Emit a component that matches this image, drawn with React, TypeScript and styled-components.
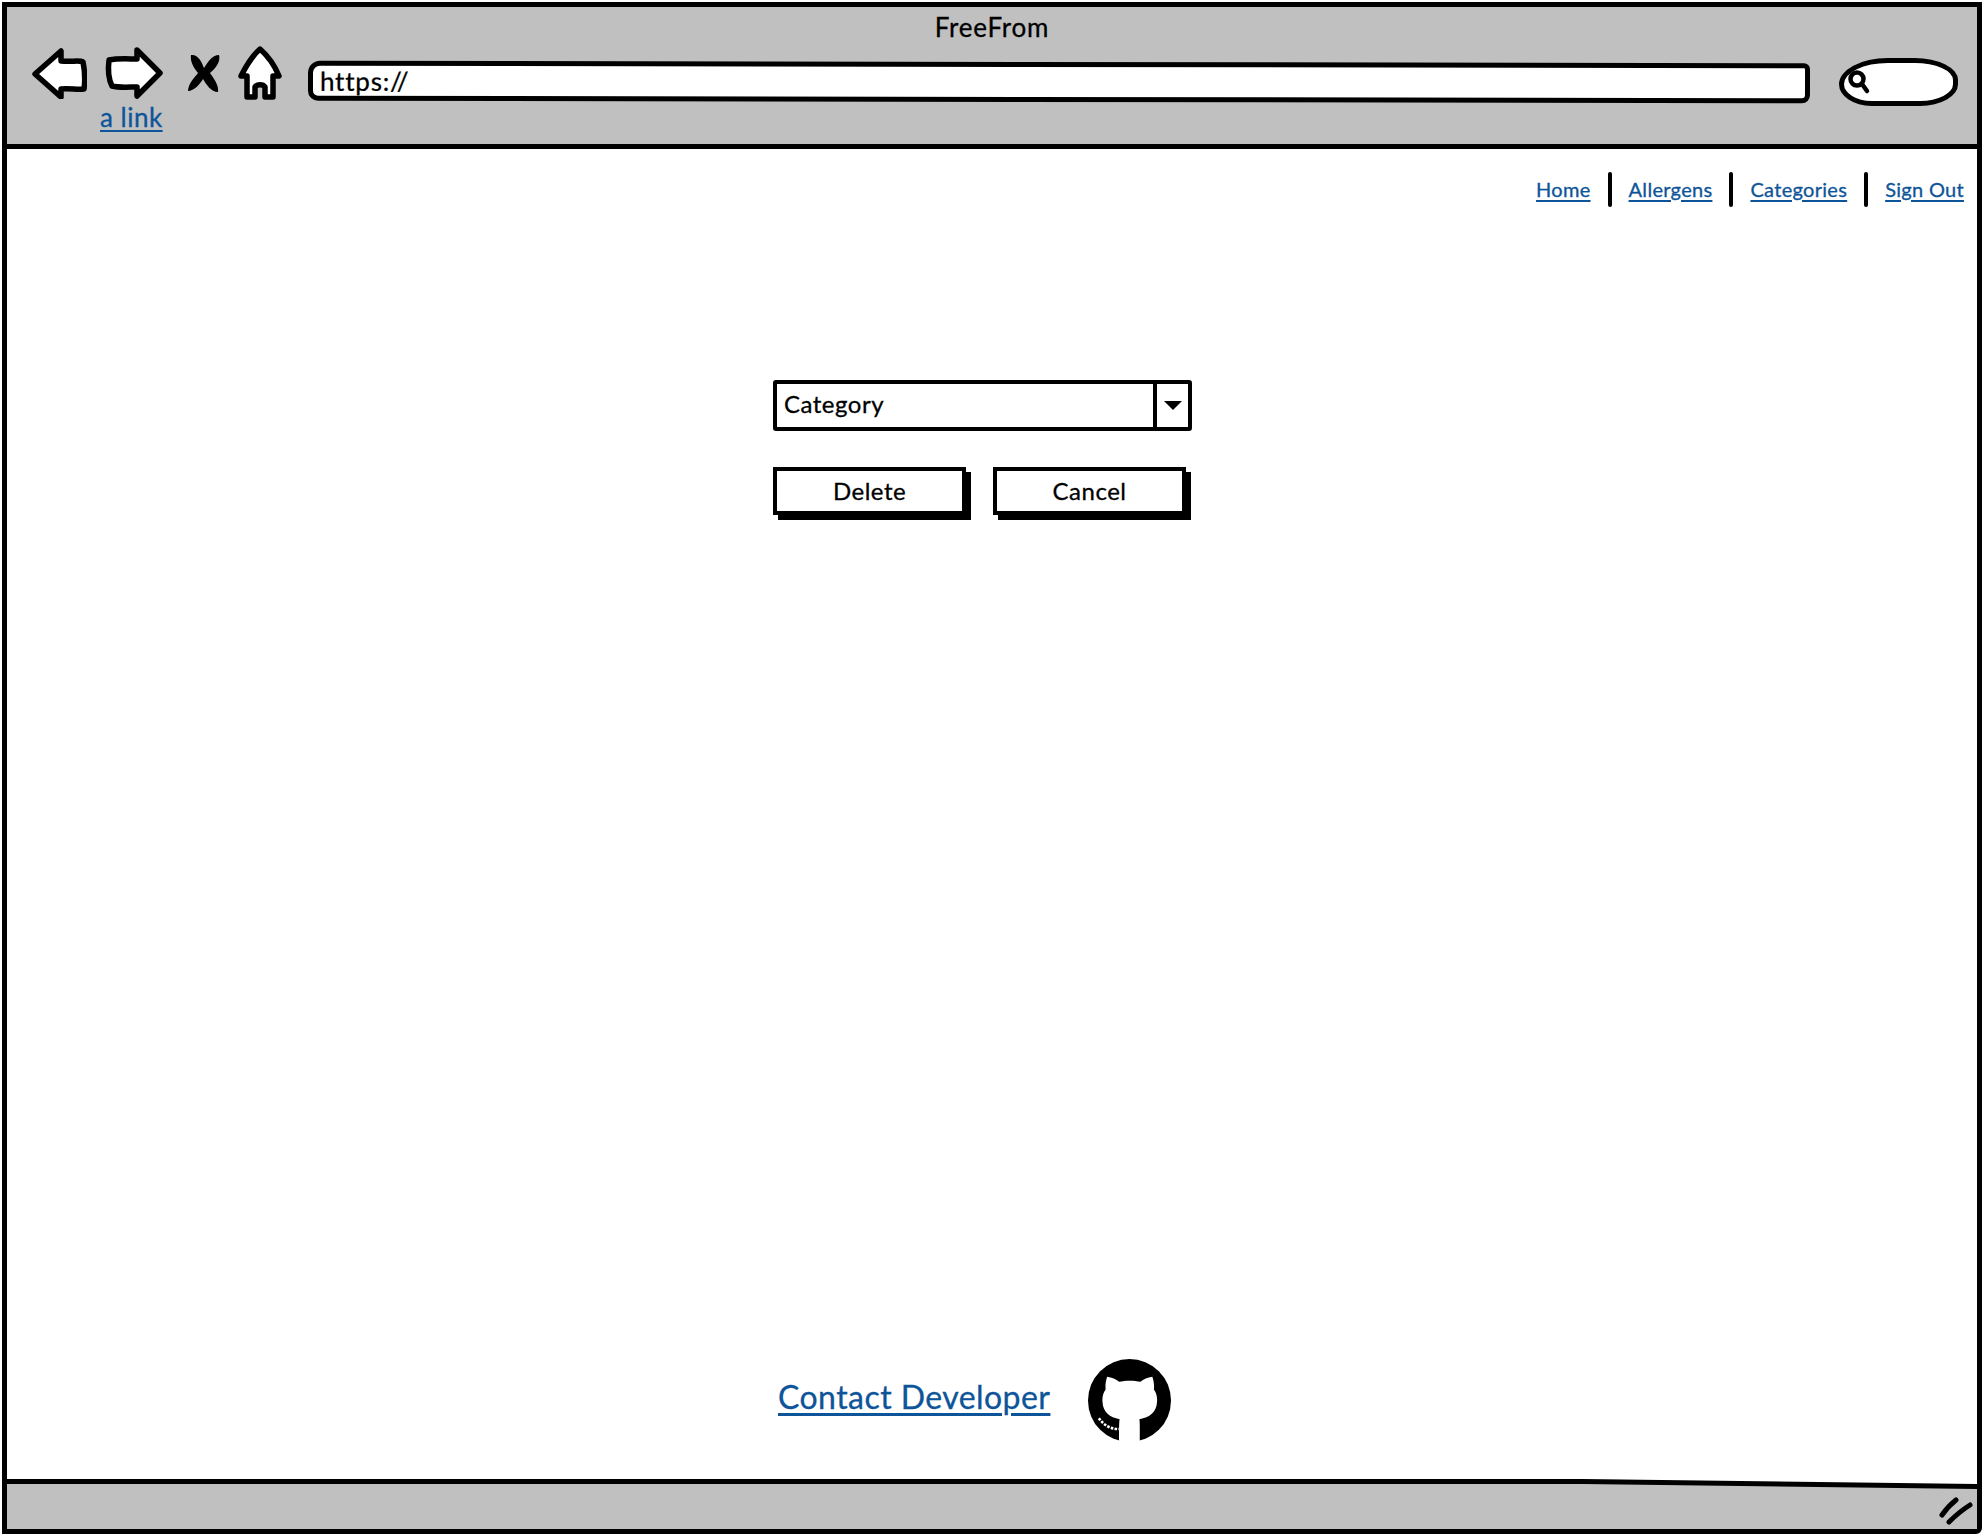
import styled, { createGlobalStyle } from 'styled-components';

const Global = createGlobalStyle`
    html, body {
        margin: 0;
        background: #fff;
    }
    body {
        font-family: "Lato", "Noto Sans", sans-serif;
        color: #000;
        -webkit-text-stroke: 0.3px currentColor;
    }
`

export default function App() {
    return (
        <>
            <Global />
            <Window>
                <Header>
                    <Title>FreeFrom</Title>
                    <Toolbar>
                        <NavGroup>
                            <NavIcons>
                                <NavIcon $left={0} width="55" height="52" viewBox="0 0 55 52">
                                    <path d="M3 27 L29 4 L29 14 C40 15 48 13 51 15 C53 25 53 35 52 42 C45 43 38 41 29 42 L29 50 Z" fill="#fff" stroke="#000" strokeWidth="5.5" strokeLinejoin="round" />
                                </NavIcon>
                                <NavIcon $left={17} width="60" height="54" viewBox="0 0 60 54">
                                    <path d="M5 14 C15 12 25 13 33 13 L33 4 L56 27 L33 50 L33 41 C25 41 15 42 8 40 C4 32 4 22 5 14 Z" fill="#fff" stroke="#000" strokeWidth="5.5" strokeLinejoin="round" />
                                </NavIcon>
                                <NavIcon $left={24} width="32" height="38" viewBox="0 0 32 38">
                                    <path d="M3 1 C10 0 14 8 16 14 C20 8 24 1 31 1 C33 8 27 15 22 19 C26 25 31 31 30 38 C23 38 18 30 15 25 C12 30 6 37 0 37 C0 30 6 24 10 19 C6 14 2 8 3 1 Z" fill="#000" />
                                </NavIcon>
                                <NavIcon $left={18} width="44" height="54" viewBox="0 0 44 54">
                                    <path d="M22 3 C30 10 36 18 41 30 L35 30 L35 51 L27 51 L27 41 C25 38 19 38 17 41 L17 51 L9 51 L9 30 L3 30 C8 20 14 10 22 3 Z" fill="#fff" stroke="#000" strokeWidth="5.5" strokeLinejoin="round" />
                                </NavIcon>
                            </NavIcons>
                            <ToolbarLink href="#">a link</ToolbarLink>
                        </NavGroup>
                        <UrlBar>https://</UrlBar>
                        <SearchBox>
                            <svg width="24" height="26" viewBox="0 0 24 26">
                                <circle cx="10" cy="10" r="6.5" fill="none" stroke="#000" strokeWidth="4.5" />
                                <path d="M15 15 L20 22" stroke="#000" strokeWidth="4.5" strokeLinecap="round" />
                            </svg>
                        </SearchBox>
                    </Toolbar>
                </Header>

                <Main>
                    <TopNav>
                        <NavLink href="#">Home</NavLink>
                        <Divider />
                        <NavLink href="#">Allergens</NavLink>
                        <Divider />
                        <NavLink href="#">Categories</NavLink>
                        <Divider />
                        <NavLink href="#">Sign Out</NavLink>
                    </TopNav>

                    <Form>
                        <Select>
                            <SelectValue>Category</SelectValue>
                            <SelectArrow />
                        </Select>
                        <Buttons>
                            <Button>Delete</Button>
                            <Button>Cancel</Button>
                        </Buttons>
                    </Form>

                    <Contact>
                        <ContactLink href="#">Contact Developer</ContactLink>
                        <svg width="83" height="83" viewBox="0 0 16 16">
                            <circle cx="8" cy="8" r="8" fill="#000" />
                            <path d="M3.7 3.4 C4.6 3.5 5.4 3.9 6 4.4 C7.2 4.1 8.9 4.1 10.1 4.4 C10.7 3.9 11.5 3.5 12.4 3.4 C12.7 4.3 12.8 5.1 12.7 5.9 C13.2 6.6 13.4 7.4 13.3 8.3 C13.2 10.3 11.9 11.3 9.9 11.6 C10 12.1 10 12.7 10 16.2 L6 16.2 C6 12.7 6 12.1 6.1 11.6 C4.2 11.3 2.9 10.3 2.8 8.3 C2.7 7.4 2.9 6.6 3.4 5.9 C3.3 5.1 3.4 4.3 3.7 3.4 Z" fill="#fff" />
                            <path d="M2.1 11.4 C3 12.7 4.2 13.5 6 13.5" fill="none" stroke="#fff" strokeWidth="0.5" strokeDasharray="0.5 0.25" />
                        </svg>
                    </Contact>
                </Main>

                <Footer>
                    <FooterInner>
                        <svg width="34" height="28" viewBox="0 0 34 28">
                            <path d="M3 18 C7 12 12 7 17 3 M10 25 C16 19 23 13 31 8" fill="none" stroke="#000" strokeWidth="5" strokeLinecap="round" />
                        </svg>
                    </FooterInner>
                </Footer>
            </Window>
        </>
    )
}

const Window = styled.div`
    box-sizing: border-box;
    width: 1980px;
    height: 1532px;
    margin: 2px 0 0 2px;
    border: 5px solid #000;
    border-bottom-right-radius: 6px;
    display: flex;
    flex-direction: column;
`

const Header = styled.header`
    box-sizing: border-box;
    height: 142px;
    background: #c0c0c0;
    border-bottom: 5px solid #000;
    flex: none;
`

const Title = styled.div`
    height: 32px;
    padding-top: 4px;
    line-height: 32px;
    text-align: center;
    font-size: 26px;
    letter-spacing: 0.8px;
`

const Toolbar = styled.div`
    display: flex;
    align-items: flex-start;
    padding-left: 25px;
`

const NavGroup = styled.div`
    display: flex;
    flex-direction: column;
    width: 250px;
    flex: none;
`

const NavIcons = styled.div`
    display: flex;
    align-items: center;
    height: 54px;
    margin-top: 3px;
`

const NavIcon = styled.svg<{ $left: number }>`
    flex: none;
    margin-left: ${(p) => p.$left}px;
`

const ToolbarLink = styled.a`
    align-self: flex-start;
    margin: 2px 0 0 68px;
    font-size: 26px;
    line-height: 30px;
    letter-spacing: 0.5px;
    color: #0d5499;
    text-underline-offset: 3px;
`

const UrlBar = styled.div`
    box-sizing: border-box;
    width: 1502px;
    height: 40px;
    margin: 19px 0 0 26px;
    padding-left: 7px;
    background: #fff;
    border: 5px solid #000;
    border-radius: 12px 6px 8px 10px;
    transform: rotate(0.1deg);
    font-size: 26px;
    line-height: 30px;
    letter-spacing: 0.8px;
`

const SearchBox = styled.div`
    box-sizing: border-box;
    width: 119px;
    height: 48px;
    margin: 15px 0 0 29px;
    padding-left: 3px;
    display: flex;
    align-items: center;
    background: #fff;
    border: 5px solid #000;
    border-radius: 45% 40% 35% 30% / 60% 50% 50% 50%;
`

const Main = styled.main`
    flex: 1;
    display: flex;
    flex-direction: column;
    background: #fff;
`

const TopNav = styled.nav`
    display: flex;
    align-items: center;
    justify-content: flex-end;
    gap: 17px;
    height: 35px;
    margin-top: 23px;
    padding-right: 13px;
`

const NavLink = styled.a`
    margin-bottom: 2px;
    font-size: 20px;
    letter-spacing: 0.3px;
    color: #0d5499;
    text-underline-offset: 3px;
`

const Divider = styled.span`
    width: 4px;
    height: 35px;
    border-radius: 2px;
    background: #000;
`

const Form = styled.form`
    display: flex;
    flex-direction: column;
    gap: 36px;
    width: 419px;
    margin: 173px 0 0 766px;
`

const Select = styled.div`
    box-sizing: border-box;
    display: flex;
    height: 51px;
    border: 4px solid #000;
    border-radius: 3px;
`

const SelectValue = styled.div`
    flex: 1;
    padding-left: 7px;
    font-size: 24px;
    line-height: 40px;
    letter-spacing: 0.5px;
`

const SelectArrow = styled.div`
    width: 31px;
    border-left: 4px solid #000;
    display: flex;
    align-items: center;
    justify-content: center;

    &::after {
        content: "";
        border-left: 9px solid transparent;
        border-right: 9px solid transparent;
        border-top: 9px solid #000;
    }
`

const Buttons = styled.div`
    display: flex;
    gap: 27px;
`

const Button = styled.div`
    box-sizing: border-box;
    width: 193px;
    height: 48px;
    border: 4px solid #000;
    box-shadow: 5px 5px 0 #000;
    text-align: center;
    font-size: 24px;
    line-height: 40px;
    letter-spacing: 0.5px;
`

const Contact = styled.div`
    display: flex;
    align-items: center;
    gap: 38px;
    margin: auto 0 37px 771px;
`

const ContactLink = styled.a`
    margin-bottom: 8px;
    font-size: 32px;
    letter-spacing: 0.44px;
    color: #0d5499;
    text-underline-offset: 4px;
`

const Footer = styled.footer`
    flex: none;
    box-sizing: border-box;
    height: 50px;
    padding-top: 5px;
    background: #000;
    clip-path: polygon(0 0, 80% 0, 100% 5px, 100% 100%, 0 100%);
`

const FooterInner = styled.div`
    box-sizing: border-box;
    height: 100%;
    padding: 0 4px 4px 0;
    background: #c0c0c0;
    clip-path: polygon(0 0, 80% 0, 100% 5px, 100% 100%, 0 100%);
    display: flex;
    justify-content: flex-end;
    align-items: flex-end;
`
